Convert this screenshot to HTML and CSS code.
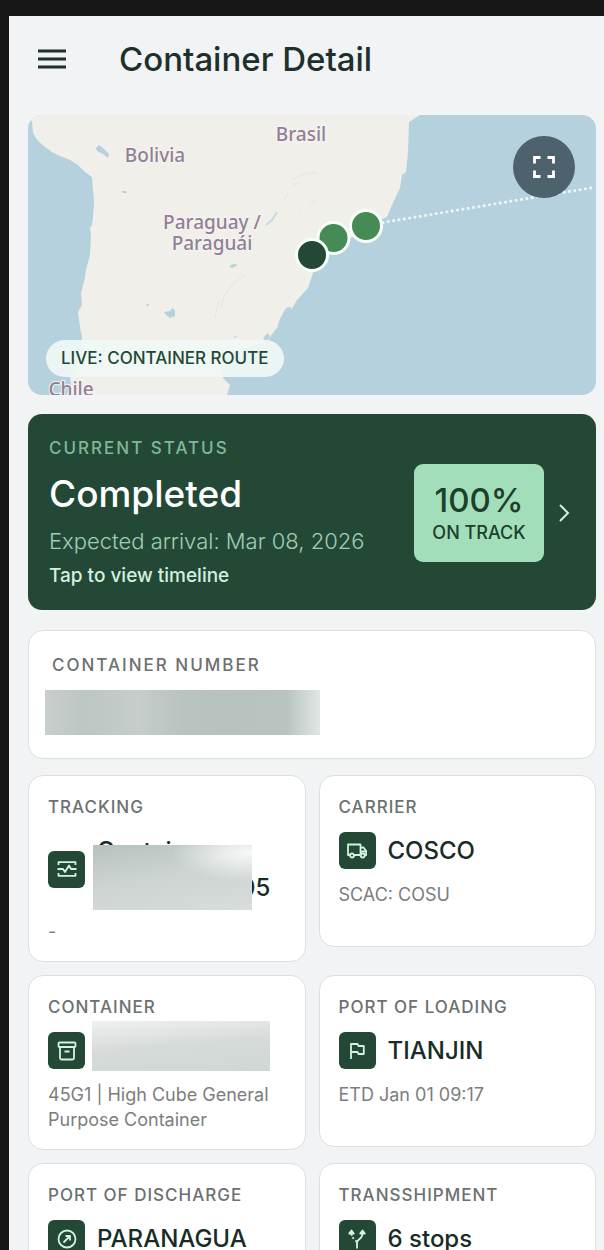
FILE: index.html
```html
<!DOCTYPE html>
<html lang="en">
<head>
<meta charset="utf-8">
<meta name="viewport" content="width=device-width, initial-scale=1">
<title>Container Detail</title>
<link rel="stylesheet" href="styles.css">
</head>
<body>
<div class="app">
  <header class="topbar">
    <button class="menu" type="button" aria-label="Open menu">
      <svg width="28" height="20" viewBox="0 0 28 20"><path d="M0 2h28M0 10h28M0 18h28" stroke="#1d302b" stroke-width="3"/></svg>
    </button>
    <h1 class="title">Container Detail</h1>
  </header>

  <main class="content">
    <section class="map" aria-label="Container route map">
      <svg class="map-art" viewBox="0 0 568 280" preserveAspectRatio="xMidYMid slice">
        <rect width="568" height="280" fill="#b5d1dd"/>
        <path fill="#f0efe9" d="M0 0L4 7L5 18L10 26L17 32L24 37L32 41L42 45L50 50L57 57L64 62L65 74L66 87L65 102L64 110L62 113L63 120L62 140L58 155L57 162L53 178L54 190L50 197L52 212L54 222L54 235L48 250L42 263L43 270L39 280H199L202 270L195 263L193 245L205 238L222 232L240 225L247 215L259 202L269 185L280 173L285 158L286 148L300 132L316 126L334 118L350 106L359 102L364 90L372 73L374 60L378 57L380 37L381 7L392 0Z"/>
        <g fill="#b5d1dd">
          <path d="M68 33l3-3 4 3 6 6-1 4-5-4-6-3zM94 76l4 0 1 2-4 0zM136 197l6-1 2-3 3 2v6l-5 2-4-3zM118 189l3 0-1 3zM201 151l5-2 4 1-6 3zM205 222l5-1-3 2zM255 198l3-5 5-1 0 6-6 8-8 6 3-8zM235 223l5-5 2 4-4 4z"/>
        </g>
        <g fill="none" stroke="#e0e6e3" stroke-width="1">
          <path d="M256 85l4-7M265 70l8-3M282 89l5-4M217 160q-14 8-22 24l-2 8M187 202l4-16M271 95l2 2M264 65q12-9 26-7"/>
          <path d="M238 110l6-5 5-8" stroke="#c6dae0" stroke-width="2"/>
        </g>
        <g class="place" text-anchor="middle">
          <text x="127" y="47">Bolivia</text>
          <text x="273" y="26">Brasil</text>
          <text x="184" y="114">Paraguay /</text>
          <text x="184" y="135">Paraguái</text>
          <text x="43" y="281">Chile</text>
        </g>
        <path d="M355 107.500L568 72" fill="none" stroke="#eef5f5" stroke-width="3.200" stroke-linecap="round" stroke-dasharray="0 5.400"/>
        <g stroke="#f7fffb" stroke-width="3">
          <circle cx="338" cy="111" r="15.500" fill="#468a56"/>
          <circle cx="305.500" cy="123" r="15.500" fill="#468a56"/>
          <circle cx="284" cy="140" r="15.500" fill="#234936"/>
        </g>
      </svg>
      <button class="expand" type="button" aria-label="Full screen map">
        <svg width="22" height="22" viewBox="0 0 22 22"><path d="M1.500 7.500V1.500H7.500M14.500 1.500H20.500V7.500M20.500 14.500V20.500H14.500M7.500 20.500H1.500V14.500" fill="none" stroke="#fff" stroke-width="2.800"/></svg>
      </button>
      <span class="live">LIVE: CONTAINER ROUTE</span>
    </section>

    <button class="status" type="button">
      <span class="status-text">
        <span class="status-label">CURRENT STATUS</span>
        <span class="status-value">Completed</span>
        <span class="status-eta">Expected arrival: Mar 08, 2026</span>
        <span class="status-hint">Tap to view timeline</span>
      </span>
      <span class="progress">
        <span class="progress-value">100%</span>
        <span class="progress-label">ON TRACK</span>
      </span>
      <svg width="24" height="24" viewBox="0 0 24 24"><path d="M8 4l8 8-8 8" fill="none" stroke="#d3f0df" stroke-width="2"/></svg>
    </button>

    <section class="card number">
      <h2 class="label">CONTAINER NUMBER</h2>
      <div class="mask mask-number"></div>
    </section>

    <div class="grid">
      <section class="card">
        <h2 class="label">TRACKING</h2>
        <div class="row">
          <span class="icon"><svg width="20" height="20" viewBox="0 0 20 20"><path d="M1.500 6V3.200H18.500V6M1.500 14V16.800H18.500V14M0.500 10H6L8 13L12 6.500L14 10H19.500"/></svg></span>
          <div class="value tracking-value">Container<br><span class="tail">05</span><span class="mask mask-tracking"></span></div>
        </div>
        <p class="sub">-</p>
      </section>

      <section class="card">
        <h2 class="label">CARRIER</h2>
        <div class="row">
          <span class="icon"><svg width="20" height="20" viewBox="0 0 20 20"><path d="M3 14H1V3.500H13.500V14H7M13.500 6.500H16.500L19.200 10V14H18M13.500 10.500H19"/><circle cx="5" cy="14.500" r="2"/><circle cx="15.700" cy="14.500" r="2"/></svg></span>
          <div class="value">COSCO</div>
        </div>
        <p class="sub">SCAC: COSU</p>
      </section>

      <section class="card">
        <h2 class="label">CONTAINER</h2>
        <div class="row">
          <span class="icon"><svg width="20" height="20" viewBox="0 0 20 20"><rect x="1.500" y="1.500" width="17" height="4.500" rx="1"/><path d="M3 6V17Q3 18.500 4.500 18.500H15.500Q17 18.500 17 17V6M7.500 10.500H12.500"/></svg></span>
          <div class="mask mask-container"></div>
        </div>
        <p class="sub">45G1 | High Cube General Purpose Container</p>
      </section>

      <section class="card">
        <h2 class="label">PORT OF LOADING</h2>
        <div class="row">
          <span class="icon"><svg width="20" height="20" viewBox="0 0 20 20"><path d="M4 18V3H10.500L11.500 5H16.800V13H11.500L10.500 11H4"/></svg></span>
          <div class="value">TIANJIN</div>
        </div>
        <p class="sub">ETD Jan 01 09:17</p>
      </section>

      <section class="card">
        <h2 class="label">PORT OF DISCHARGE</h2>
        <div class="row">
          <span class="icon"><svg width="20" height="20" viewBox="0 0 20 20"><circle cx="10" cy="10" r="8.500"/><path d="M6.500 13.500L13 7M8.500 7H13V11.500"/></svg></span>
          <div class="value">PARANAGUA</div>
        </div>
      </section>

      <section class="card">
        <h2 class="label">TRANSSHIPMENT</h2>
        <div class="row">
          <span class="icon"><svg width="20" height="20" viewBox="0 0 20 20"><path d="M10 19.500V13.500Q10 12 12 10.500Q15.500 8 15.500 4M9.800 13.500Q9.600 12.500 8.400 11.400M6.700 9.800L5.500 8.200M4.700 6.800L4.500 4"/><path d="M2.200 4.500L4.500 1.500L6.800 4.500ZM13.200 4.500L15.500 1.500L17.800 4.500Z" fill="#d3f3e2"/></svg></span>
          <div class="value">6 stops</div>
        </div>
      </section>
    </div>
  </main>
</div>
</body>
</html>
```
FILE: styles.css
```css
* { box-sizing: border-box; }

body {
  margin: 0;
  background: #171717;
  font-family: Inter, "Liberation Sans", sans-serif;
  color: #1d302b;
}

h1, h2, p { margin: 0; font-weight: 400; }

button {
  border: 0;
  padding: 0;
  font: inherit;
  cursor: pointer;
}

svg { display: block; }

.app {
  height: calc(100vh - 16px);
  margin: 16px 0 0 9px;
  overflow: hidden;
  background: #f1f3f5;
}

.topbar {
  display: flex;
  align-items: center;
  gap: 53px;
  padding: 19px 29px 32px;
}

.menu { background: none; }

.title {
  font-size: 33px;
  line-height: 48px;
  font-weight: 500;
}

.content { padding: 0 8px 0 19px; }

.map {
  position: relative;
  height: 280px;
  border-radius: 14px;
  overflow: hidden;
}

.map-art { width: 100%; height: 100%; }

.place {
  font: 500 19px "Noto Sans", sans-serif;
  fill: #917f97;
  stroke: #f6f4f1;
  stroke-width: 2px;
  paint-order: stroke;
}

.expand {
  position: absolute;
  top: 21px;
  right: 21px;
  display: grid;
  place-items: center;
  width: 62px;
  height: 62px;
  border-radius: 50%;
  background: #4e626d;
}

.live {
  position: absolute;
  left: 18px;
  bottom: 18px;
  padding: 0 15px;
  border-radius: 19px;
  background: rgba(240, 248, 246, 0.9);
  color: #234936;
  font-size: 17px;
  line-height: 37px;
  font-weight: 500;
}

.status {
  display: flex;
  align-items: center;
  gap: 8px;
  width: 100%;
  margin-top: 19px;
  padding: 22px 20px 20px 21px;
  border-radius: 14px;
  background: #234936;
  text-align: left;
}

.status-text {
  display: flex;
  flex: 1;
  flex-direction: column;
  gap: 8px;
}

.status-label {
  color: #7fb898;
  font-size: 17px;
  line-height: 24px;
  font-weight: 500;
  letter-spacing: 2px;
}

.status-value {
  color: #fff;
  font-size: 37px;
  line-height: 52px;
  font-weight: 500;
}

.status-eta {
  color: #a0cdb4;
  font-size: 22px;
  line-height: 26px;
  font-weight: 300;
  white-space: nowrap;
}

.status-hint {
  color: #d3f0df;
  font-size: 19px;
  line-height: 28px;
  font-weight: 500;
}

.progress {
  display: flex;
  flex-direction: column;
  align-items: center;
  width: 130px;
  padding: 15px 0 17px;
  border-radius: 9px;
  background: #a3debb;
  color: #1c4029;
}

.progress-value {
  font-size: 33px;
  line-height: 42px;
  font-weight: 500;
}

.progress-label {
  font-size: 18px;
  line-height: 24px;
  font-weight: 500;
}

.card {
  min-height: 172px;
  padding: 19px 19px 17px;
  border: 1px solid #dcdfdf;
  border-radius: 15px;
  background: #fff;
}

.number {
  min-height: 0;
  margin: 20px 0 16px;
  padding: 22px 16px 23px;
}

.number .label {
  padding-left: 7px;
  letter-spacing: 2px;
}

.label {
  color: #6c706f;
  font-size: 17px;
  line-height: 24px;
  font-weight: 500;
  letter-spacing: 1px;
  white-space: nowrap;
}

.grid {
  display: grid;
  grid-template-columns: 1fr 1fr;
  align-items: start;
  gap: 13px;
}

.row {
  display: flex;
  align-items: center;
  gap: 12px;
  margin: 13px 0;
}

.icon {
  display: grid;
  flex: none;
  place-items: center;
  width: 37px;
  height: 37px;
  border-radius: 6px;
  background: #234936;
}

.icon svg {
  fill: none;
  stroke: #d3f3e2;
  stroke-width: 1.8;
  stroke-linejoin: round;
}

.value {
  color: #172c26;
  font-size: 24px;
  line-height: 37px;
  font-weight: 500;
  white-space: nowrap;
}

.tracking-value { position: relative; }

.tail { padding-left: 143px; }

.sub {
  color: #7b7e7d;
  font-size: 18px;
  line-height: 25px;
  font-weight: 400;
}

.mask-number {
  width: 275px;
  max-width: 100%;
  height: 45px;
  margin-top: 13px;
  background: linear-gradient(90deg, #c8cfcc, #bcc6c2 14%, #c6cdca 34%, #b9c3c0 50%, #b7c2be 66%, #b9c4c0 88%, #e2e6e5);
}

.mask-tracking {
  position: absolute;
  left: -4px;
  top: 13px;
  width: 159px;
  height: 65px;
  background:
    radial-gradient(ellipse at 97% 12%, #f8f9f9, rgba(248, 249, 249, 0) 35%),
    linear-gradient(170deg, #b6c2be, #ccd3d0 45%, #d8dddb);
}

.mask-container {
  width: 178px;
  height: 50px;
  margin: -11px 0 -2px -5px;
  background: linear-gradient(175deg, #eff1f0, #d6dbd9 48%, #cfd7d4);
}
```
